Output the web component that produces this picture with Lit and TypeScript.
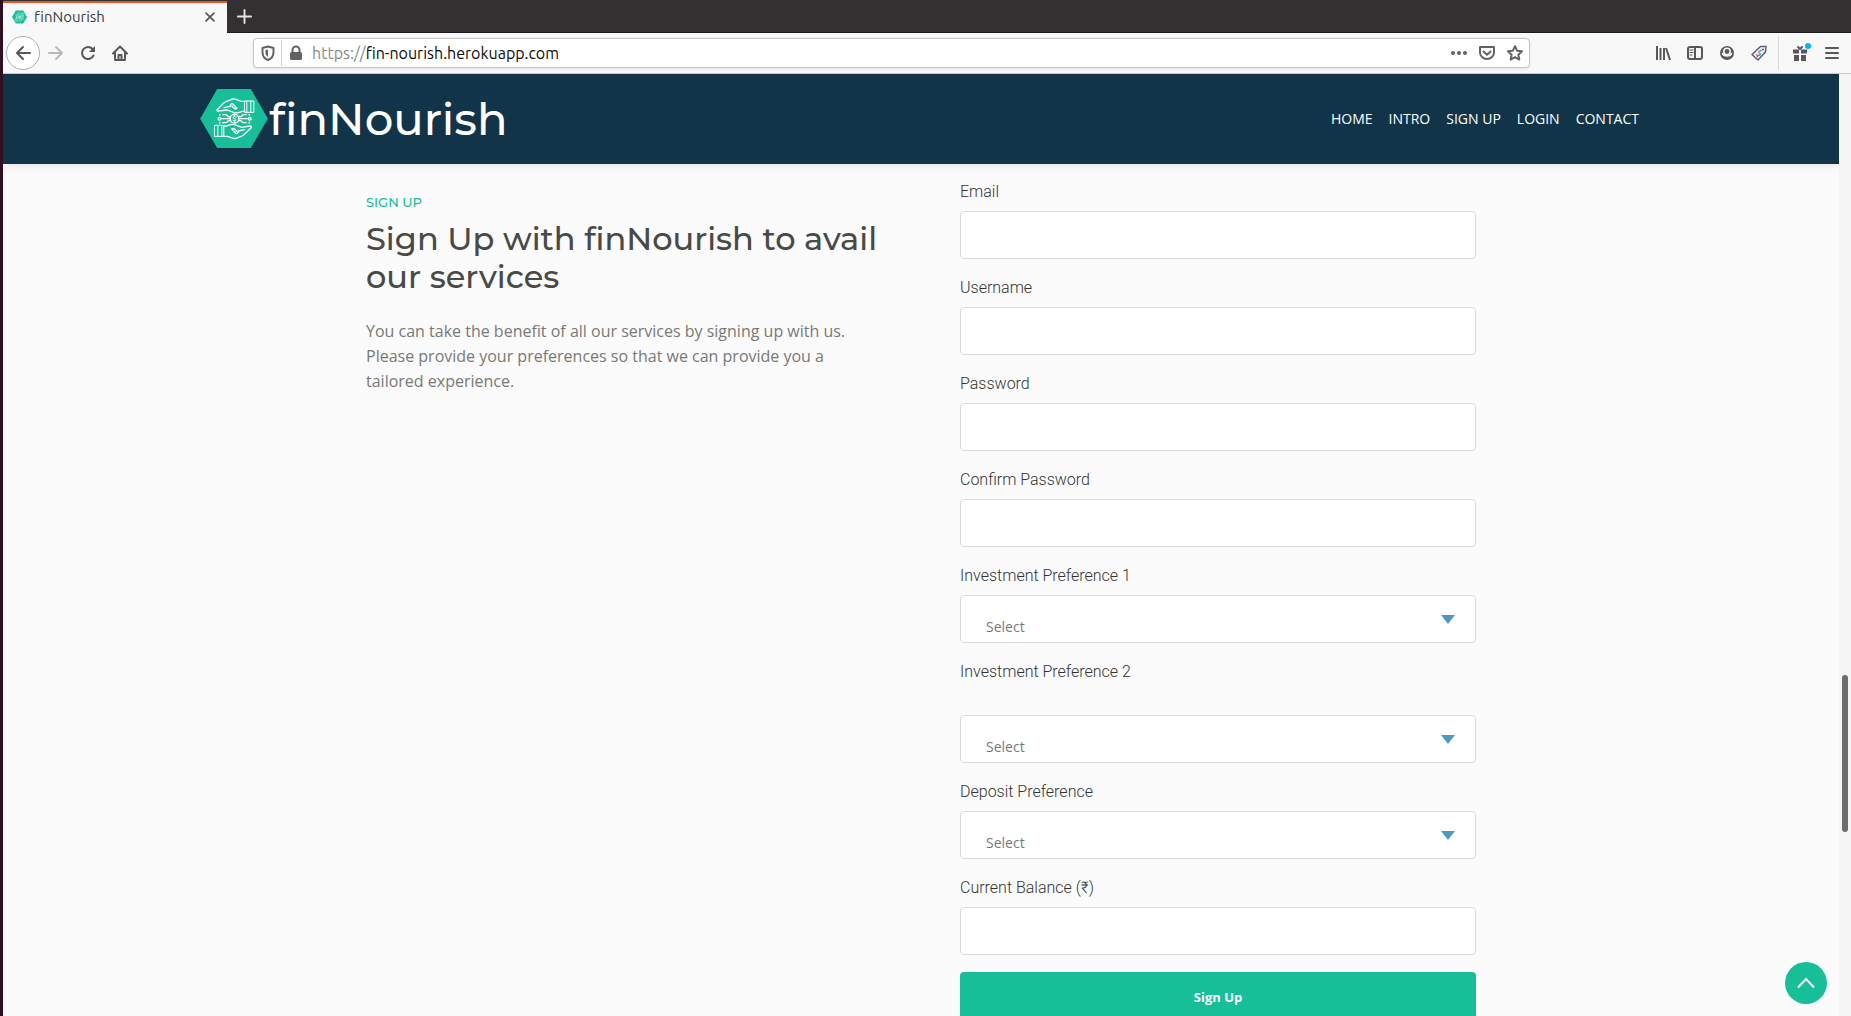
import { LitElement, html, css, svg, nothing } from "lit";
import { customElement } from "lit/decorators.js";

/* ---------- shared artwork ---------- */

const hexLogo = html`<svg viewBox="14 21 203 177" width="100%" height="100%" aria-hidden="true">
  <polygon points="14,110 65,21 166,21 217,110 166,198 65,198" fill="#17bf98" />
  <g fill="none" stroke="#fff" stroke-width="4" stroke-linejoin="round" stroke-linecap="round">
    <path d="M65 83 L84 64 Q88 60 93 58 L112 51 Q117 50 121 52 L137 58 H148" />
    <path d="M148 88 H141 L128 92 Q122 94 116 92 L95 84 L68 87 Q63 87 65 83" />
    <path d="M86 77 L104 73 Q104 66 109 65 Q113 65 117 71 L124 79 Q121 83 116 79 L109 72" />
    <path d="M148 57 H175 V91 H148 Z M154 57 V91 M166 57 V91" stroke-width="3" />
    <path d="M167 137 L148 156 Q144 160 139 162 L122 169 Q117 170 113 169 L96 163 H86" />
    <path d="M86 132 H93 L105 128 Q111 126 117 128 L139 136 L163 132 Q170 132 167 137" />
    <path d="M147 143 L129 147 Q129 154 124 155 Q120 155 116 149 L109 141 Q112 137 117 141 L124 148" />
    <path d="M58 130 H85 V163 H58 Z M67 130 V163 M79 130 V163" stroke-width="3" />
    <circle cx="117" cy="110" r="13" />
    <path d="M122 105 Q117 101 113 105 Q112 109 117 110 Q122 111 121 115 Q117 119 112 115 M117 100 V103 M117 117 V120" stroke-width="3" />
    <path d="M78 110 H104 M130 110 H158 M82 98 H92 L99 104 H105 M152 98 H143 L136 104 H129 M82 122 H92 L99 116 H105 M152 122 H143 L136 116 H129" />
    <circle cx="72" cy="110" r="4" /><circle cx="163" cy="110" r="4" />
    <path d="M73 97 V99 M161 97 V99 M73 121 V123 M161 121 V123" />
  </g>
</svg>`;

const iconPaths: Record<string, unknown> = {
  back: svg`<path d="M2 8h13M8 2L2 8l6 6" />`,
  forward: svg`<path d="M1 8h13M8 2l6 6-6 6" />`,
  reload: svg`<path d="M13.500 10.500A6 6 0 1 1 12.500 4" /><path d="M15 1v6H9z" fill="currentColor" stroke="none" />`,
  home: svg`<path d="M1 8.500L8 1.500l7 7" /><path d="M3 8v7h10V8" /><path d="M6.500 15v-5h3v5" />`,
  shield: svg`<path d="M8 1.500l5.500 1.500v4.500c0 3.500-2 6-5.500 7.500-3.500-1.500-5.500-4-5.500-7.500V3z" /><path d="M8 4.500v7.500c-1.700-1.200-2.500-2.500-2.500-4.500V5z" fill="currentColor" stroke="none" />`,
  lock: svg`<path d="M4.500 8V5a3.500 3.500 0 0 1 7 0v3" /><rect x="2" y="7" width="12" height="8" rx="1.500" fill="currentColor" stroke="none" />`,
  dots: svg`<g fill="currentColor" stroke="none"><circle cx="2" cy="8" r="2" /><circle cx="8" cy="8" r="2" /><circle cx="14" cy="8" r="2" /></g>`,
  pocket: svg`<path d="M1 2h14v5.500a7 6.500 0 0 1-14 0z" /><path d="M4.500 6.500L8 9.700l3.500-3.200" />`,
  star: svg`<path d="M8 1.200l2.100 4.500 4.900.6-3.600 3.400.9 4.900L8 12.200l-4.300 2.400.9-4.900L1 6.300l4.900-.6z" />`,
  library: svg`<path d="M2 1v14M5.500 3v12M9 3v12M11 3l4 12" stroke-linecap="butt" />`,
  sidebar: svg`<rect x="1" y="2" width="14" height="12" rx="2" /><path d="M8 2v12" /><path d="M3 5h3M3 7.500h3M3 10h2" stroke-width="1" />`,
  account: svg`<circle cx="8" cy="8" r="7" fill="currentColor" stroke="none" /><path d="M3.500 8.500c1 3.200 8 3.200 9 0" stroke="#f8f8f8" stroke-width="1.500" /><circle cx="8" cy="6.500" r="3.200" stroke="#f8f8f8" stroke-width="1.500" />`,
  tag: svg`<g stroke-width="1.500"><path d="M9.500 1.500H15l-.5 5.500L7 15 1 9.500z" stroke="#5f5b78" /><circle cx="12" cy="4.500" r="1" fill="#5f5b78" stroke="none" /><path d="M10 5.500L8 6.500" stroke="#2bb7d9" /><path d="M7.500 7.500l2 1.500" stroke="#ff8a1e" /><path d="M9.500 9.500l-2 1" stroke="#18b9c9" /><path d="M6 10l.5 1.500" stroke="#d935b8" /></g>`,
  gift: svg`<g fill="currentColor" stroke="none"><path d="M1 4.500h6v4H1zM9 4.500h6v4H9zM2 10h5v6H2zM9 10h5v6H9z" /></g><path d="M8 4L6 2M8 4l2-2" />`,
  menu: svg`<path d="M2 3h12M2 8h12M2 13h12" />`,
  close: svg`<path d="M3.500 3.500l9 9M12.500 3.500l-9 9" />`,
  plus: svg`<path d="M8 1v14M1 8h14" />`,
};

const icon = (name: string) => html`<svg class="glyph" viewBox="0 0 16 16" width="16" height="16" fill="none"
  stroke="currentColor" stroke-width="2" stroke-linejoin="round" stroke-linecap="round" aria-hidden="true">${iconPaths[name]}</svg>`;

/* ---------- browser window frame ---------- */

@customElement("browser-bar")
class BrowserBar extends LitElement {
  static styles = css`
    :host { display: block; font: 15px/18px Ubuntu, "Noto Sans", sans-serif; color: #3c3c3c; }
    button { display: grid; place-items: center; margin: 0; padding: 0; border: 0; background: none; color: #58585a; width: 32px; height: 32px; flex: none; }
    .glyph { display: block; }
    .tabs { display: flex; height: 33px; box-sizing: border-box; padding-top: 1px; background: #323031; border-bottom: 1px solid #1c1b1c; }
    .tab { display: flex; align-items: center; width: 224px; height: 32px; box-sizing: border-box; padding: 0 2px 2px 9px; background: #f8f8f8; border-top: 2px solid #e95420; }
    .favicon { width: 15px; height: 14px; display: flex; margin-right: 7px; }
    .title { flex: 1; font-variant-ligatures: none; }
    .tab button { width: 30px; height: 28px; }
    .tab button .glyph { width: 14px; height: 14px; }
    .new { color: #e6e6e6; height: 30px; width: 34px; }
    .new .glyph { width: 15px; height: 15px; }
    .toolbar { display: flex; align-items: center; height: 41px; box-sizing: border-box; padding: 0 3px; background: #f8f8f8; border-bottom: 1px solid #c8c8c8; }
    .toolbar .back { width: 34px; height: 34px; border: 1px solid #b0b0b0; border-radius: 50%; background: #fff; }
    .toolbar .off { color: #b9b9b9; }
    .address { flex: 1; display: flex; align-items: center; height: 30px; box-sizing: border-box; margin: 0 117px; border: 1px solid #c4c4c4; border-radius: 4px; background: #fff; box-shadow: 0 1px 3px rgba(0, 0, 0, 0.08); }
    .address button { width: 28px; height: 26px; color: #636363; }
    .address .divided { border-right: 1px solid #cfcfcf; }
    .url { flex: 1; padding-left: 2px; color: #8a8a8a; font-size: 16px; }
    .host { color: #0c0c0d; }
    .rule { width: 1px; height: 34px; margin: 0 5px 0 3px; background: #dadada; }
    .gift { position: relative; }
    .gift::after { content: ""; position: absolute; right: 5px; top: 6px; width: 6px; height: 6px; border-radius: 50%; background: #00b3ff; }
  `;

  render() {
    return html`
      <div class="tabs">
        <div class="tab">
          <span class="favicon">${hexLogo}</span>
          <span class="title">finNourish</span>
          <button aria-label="Close tab">${icon("close")}</button>
        </div>
        <button class="new" aria-label="New tab">${icon("plus")}</button>
      </div>
      <div class="toolbar">
        <button class="back" aria-label="Back">${icon("back")}</button>
        <button class="off" aria-label="Forward">${icon("forward")}</button>
        <button aria-label="Reload">${icon("reload")}</button>
        <button aria-label="Home">${icon("home")}</button>
        <div class="address">
          <button class="divided" aria-label="Protections">${icon("shield")}</button>
          <button aria-label="Site information">${icon("lock")}</button>
          <span class="url">https://<span class="host">fin-nourish.herokuapp.com</span></span>
          <button aria-label="Page actions">${icon("dots")}</button>
          <button aria-label="Save to Pocket">${icon("pocket")}</button>
          <button aria-label="Bookmark">${icon("star")}</button>
        </div>
        <button aria-label="Library">${icon("library")}</button>
        <button aria-label="Sidebars">${icon("sidebar")}</button>
        <button aria-label="Account">${icon("account")}</button>
        <button aria-label="Offers">${icon("tag")}</button>
        <span class="rule"></span>
        <button class="gift" aria-label="What's new">${icon("gift")}</button>
        <button aria-label="Menu">${icon("menu")}</button>
      </div>
    `;
  }
}

/* ---------- site header ---------- */

@customElement("site-header")
class SiteHeader extends LitElement {
  static styles = css`
    :host { display: block; background: #113448; box-shadow: 0 1px 10px rgba(0, 0, 0, 0.1); }
    .inner { display: flex; align-items: center; justify-content: space-between; max-width: 1442px; height: 90px; margin: 0 auto; }
    .brand { display: flex; align-items: flex-start; gap: 1px; color: #fff; text-decoration: none; font: 500 45px/60px Montserrat, "DejaVu Sans", sans-serif; font-variant-ligatures: none; }
    .mark { display: flex; width: 68px; height: 59px; }
    .nav { display: flex; gap: 16px; padding-right: 3px; }
    .nav a { color: #fff; text-decoration: none; font: 14px/20px "Open Sans", sans-serif; }
  `;

  render() {
    const links = ["HOME", "INTRO", "SIGN UP", "LOGIN", "CONTACT"];
    return html`
      <div class="inner">
        <a class="brand" href="#home"><span class="mark">${hexLogo}</span><span>finNourish</span></a>
        <nav class="nav">
          ${links.map((t) => html`<a href="#${t.toLowerCase().replace(" ", "-")}">${t}</a>`)}
        </nav>
      </div>
    `;
  }
}

/* ---------- sign up section ---------- */

interface Field {
  id: string;
  label: string;
  type: "text" | "email" | "password" | "number" | "select";
  spaced?: boolean;
}

const fields: Field[] = [
  { id: "email", label: "Email", type: "email" },
  { id: "username", label: "Username", type: "text" },
  { id: "password", label: "Password", type: "password" },
  { id: "confirm", label: "Confirm Password", type: "password" },
  { id: "investment-1", label: "Investment Preference 1", type: "select" },
  { id: "investment-2", label: "Investment Preference 2", type: "select", spaced: true },
  { id: "deposit", label: "Deposit Preference", type: "select" },
  { id: "balance", label: "Current Balance (₹)", type: "number" },
];

@customElement("signup-section")
class SignupSection extends LitElement {
  static styles = css`
    :host { display: block; font-family: "Open Sans", sans-serif; }
    .inner { display: grid; grid-template-columns: 1fr 1fr; column-gap: 78px; max-width: 1110px; margin: 0 auto; padding: 16px 0 48px; }
    .intro { padding-top: 12px; }
    .eyebrow { margin: 0; color: #17bf98; font: 500 13px/20px Montserrat, "DejaVu Sans", sans-serif; }
    .heading { margin: 8px 0 23px; color: #484a46; font: 500 32px/38px Montserrat, "DejaVu Sans", sans-serif; font-variant-ligatures: none; }
    .copy { margin: 0; color: #787976; font-size: 16px; line-height: 25px; }
    .form { display: flex; flex-direction: column; gap: 17px; }
    .field { display: flex; flex-direction: column; gap: 7px; }
    .field.spaced { gap: 31px; }
    label { color: #333; font: 300 16px/24px Roboto, sans-serif; }
    .control { display: block; width: 100%; height: 48px; box-sizing: border-box; margin: 0; border: 1px solid #dadada; border-radius: 4px; background: #fff; color: #787976; font: 14px/19px "Open Sans", sans-serif; padding: 0 26px; outline: none; appearance: none; }
    select.control { padding: 21px 26px 6px 25px; }
    .picker { position: relative; }
    .picker::after { content: ""; position: absolute; right: 21px; top: 20px; border: 7px solid transparent; border-top: 9px solid #4a9cc7; border-bottom: 0; pointer-events: none; }
    .submit { height: 50px; border: 0; border-radius: 4px; background: #17bf98; color: #fff; font: 700 13px/20px "Open Sans", sans-serif; }
  `;

  private control(f: Field) {
    if (f.type === "select") {
      return html`<div class="picker"><select class="control" id=${f.id}><option>Select</option></select></div>`;
    }
    return html`<input class="control" id=${f.id} type=${f.type} autocomplete=${f.type === "password" ? "new-password" : nothing} />`;
  }

  render() {
    return html`
      <div class="inner">
        <div class="intro">
          <p class="eyebrow">SIGN UP</p>
          <h2 class="heading">Sign Up with finNourish to avail our services</h2>
          <p class="copy">You can take the benefit of all our services by signing up with us. Please provide your preferences so that we can provide you a tailored experience.</p>
        </div>
        <form class="form">
          ${fields.map((f) => html`
            <div class="field ${f.spaced ? "spaced" : ""}">
              <label for=${f.id}>${f.label}</label>
              ${this.control(f)}
            </div>`)}
          <button class="submit" type="button">Sign Up</button>
        </form>
      </div>
    `;
  }
}

/* ---------- window ---------- */

@customElement("app-root")
class AppRoot extends LitElement {
  static styles = css`
    :host { display: flex; flex-direction: column; height: 100vh; box-sizing: border-box; overflow: hidden; border-left: 3px solid #2f0f20; background: #fbfbfb; }
    .view { flex: 1; min-height: 0; display: flex; }
    .page { position: relative; flex: 1; min-width: 0; overflow: hidden; background: #fbfbfb; }
    .track { position: relative; width: 12px; background: #f5f5f5; }
    .thumb { position: absolute; left: 3px; right: 3px; top: 63.8%; height: 16.7%; border-radius: 3px; background: #6d6d6b; }
    .top { position: absolute; right: 12px; bottom: 12px; display: grid; place-items: center; width: 42px; height: 42px; border-radius: 50%; background: #17bf98; }
  `;

  render() {
    return html`
      <browser-bar></browser-bar>
      <div class="view">
        <main class="page">
          <site-header></site-header>
          <signup-section></signup-section>
          <a class="top" href="#home" aria-label="Back to top">
            <svg width="18" height="12" viewBox="0 0 18 12" fill="none" stroke="#fff" stroke-width="2"><path d="M1 10.500L9 2l8 8.500" /></svg>
          </a>
        </main>
        <div class="track"><div class="thumb"></div></div>
      </div>
    `;
  }
}
